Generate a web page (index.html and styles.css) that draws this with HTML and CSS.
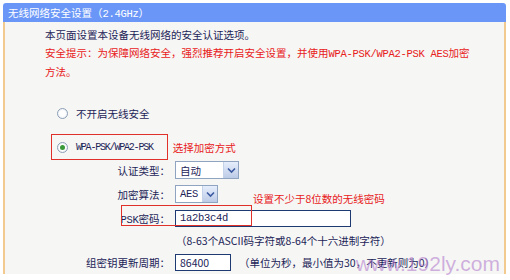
FILE: index.html
```html
<!DOCTYPE html>
<html lang="zh-CN">
<head>
    <meta charset="UTF-8">
    <title>无线网络安全设置</title>
    <link rel="stylesheet" href="styles.css">
</head>
<body>

    <div class="frame">
        <div class="title">无线网络安全设置（<span class="mono">2.4GHz</span>）</div>

        <div class="panel">
            <p class="intro">本页面设置本设备无线网络的安全认证选项。</p>
            <p class="warn">安全提示：为保障网络安全，强烈推荐开启安全设置，并使用<span class="mono">WPA-PSK/WPA2-PSK AES</span>加密<br>方法。</p>

            <div class="opt">
                <span class="radio"></span>
                <span>不开启无线安全</span>
            </div>

            <div class="opt-line">
                <div class="opt boxed">
                    <span class="radio checked"></span>
                    <span class="mono narrow">WPA-PSK/WPA2-PSK</span>
                </div>
                <span class="note">选择加密方式</span>
            </div>

            <!-- form rows -->
            <div class="form">
                <label>认证类型：</label>
                <div class="select wide"><span>自动</span><i class="drop"><svg width="9" height="7" viewBox="0 0 9 7"><path d="M1 1.5 L4.5 5 L8 1.5" fill="none" stroke="#3b5aa0" stroke-width="1.6"/></svg></i></div>

                <label>加密算法：</label>
                <div class="select"><span class="mono">AES</span><i class="drop"><svg width="9" height="7" viewBox="0 0 9 7"><path d="M1 1.5 L4.5 5 L8 1.5" fill="none" stroke="#3b5aa0" stroke-width="1.6"/></svg></i></div>

                <label><span class="mono">PSK</span>密码：</label>
                <div class="input long mono">1a2b3c4d</div>

                <span></span>
                <div class="hint">（8-63个ASCII码字符或8-64个十六进制字符）</div>

                <label>组密钥更新周期：</label>
                <div class="row">
                    <div class="input short">86400</div>
                    <span class="hint">（单位为秒，最小值为30，不更新则为0）</span>
                </div>
            </div>
        </div>
    </div>

    <!-- annotations over the page -->
    <div class="mark psk-box"></div>
    <div class="note pin">设置不少于8位数的无线密码</div>
    <div class="watermark">www.192ly.com</div>

</body>
</html>
```

FILE: styles.css
```css
body {
    margin: 0;
    background: #ffffff;
    font-family: "Noto Sans CJK SC", sans-serif;
    font-size: 10.5px;
    color: #1c2458;
    position: relative;
    width: 510px;
    height: 280px;
    overflow: hidden;
}
p {
    margin: 0;
}
.mono {
    font-family: "Liberation Mono", monospace;
    letter-spacing: -0.3px;
}
.narrow {
    font-size: 10px;
    letter-spacing: -1.2px;
}
.frame {
    margin: 3px 0 0 3px;
    width: 503px;
}
.title {
    height: 19px;
    line-height: 19px;
    padding-left: 5px;
    background: #6a97f7;
    color: #ffffff;
    border-radius: 3px 3px 0 0;
}
.panel {
    height: 252px;
    background: #f6f6f4;
    border-left: 2px solid #f2c98e;
    border-right: 2px solid #f2c98e;
    box-sizing: border-box;
    padding-top: 4px;
}
.intro, .warn {
    padding-left: 40px;
    line-height: 18px;
}
.warn {
    color: #e8201a;
}
.opt {
    display: flex;
    align-items: center;
    gap: 8px;
    height: 20px;
    padding-left: 52px;
    margin-top: 22px;
}
.opt-line {
    display: flex;
    align-items: center;
    gap: 5px;
    margin-top: 11px;
}
.opt-line .opt {
    margin: 0 0 0 46px;
    padding-left: 5px;
    padding-right: 14px;
    height: 24px;
}
.boxed {
    border: 1px solid #e0302a;
}
.note {
    color: #e8201a;
}
.radio {
    width: 11px;
    height: 11px;
    border-radius: 50%;
    border: 1px solid #8c9fb6;
    background: radial-gradient(circle, #ffffff 40%, #e4e8ee 100%);
    box-sizing: border-box;
    display: flex;
    align-items: center;
    justify-content: center;
}
.radio.checked::after {
    content: "";
    width: 5px;
    height: 5px;
    border-radius: 50%;
    background: #3a9a3a;
}
.form {
    display: grid;
    grid-template-columns: 165px auto;
    grid-template-rows: 22px 22px 22px 18px 22px;
    column-gap: 5px;
    row-gap: 2px;
    margin-top: -1px;
    align-items: center;
}
.form label {
    text-align: right;
}
.select {
    width: 43px;
    height: 18px;
    border: 1px solid #8ea4c0;
    background: #ffffff;
    box-sizing: border-box;
    display: flex;
    align-items: center;
    justify-content: space-between;
    padding-left: 4px;
}
.select.wide {
    width: 64px;
}
.drop {
    width: 14px;
    height: 16px;
    background: linear-gradient(#e6eefc, #bccbe6);
    border-left: 1px solid #c4d2ea;
    display: flex;
    align-items: center;
    justify-content: center;
}
.input {
    height: 17px;
    line-height: 15px;
    border: 1px solid #1e3a72;
    background: #ffffff;
    box-sizing: border-box;
    padding-left: 4px;
}
.input.long {
    width: 176px;
}
.input.short {
    width: 56px;
}
.row {
    display: flex;
    align-items: center;
    gap: 7px;
}
.hint {
    padding-left: 1px;
}
.mark {
    position: absolute;
    border: 1px solid #e0302a;
}
.psk-box {
    left: 121px;
    top: 205px;
    width: 129px;
    height: 19px;
}
.pin {
    position: absolute;
    left: 253px;
    top: 191px;
}
.watermark {
    position: absolute;
    right: 10px;
    top: 254px;
    font-family: "Liberation Sans", Arial, sans-serif;
    font-size: 21px;
    line-height: 20px;
    color: rgba(180, 126, 206, 0.6);
}
```
